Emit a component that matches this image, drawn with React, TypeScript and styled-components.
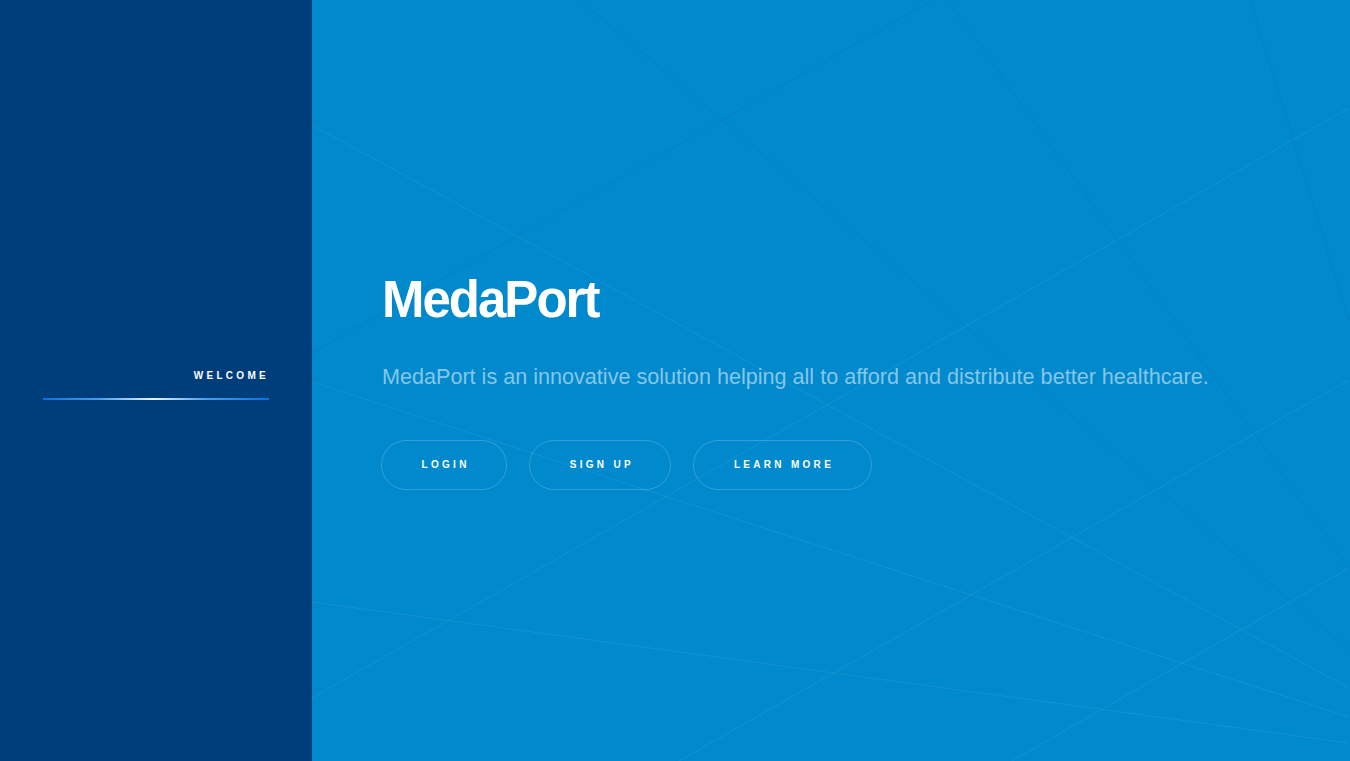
import React from "react";
import styled, { createGlobalStyle } from "styled-components";

const GlobalStyle = createGlobalStyle`
  html, body, #root { margin: 0; padding: 0; height: 100%; }
  body { font-family: "Liberation Sans", Arial, sans-serif; overflow: hidden; }
  * { box-sizing: border-box; }
`;

const Page = styled.div`
  display: grid;
  grid-template-columns: 312px 1fr;
  height: 100vh;
  width: 100vw;
`;

const Sidebar = styled.aside`
  background: #003d7b;
  display: flex;
  flex-direction: column;
  justify-content: center;
  padding: 9px 43px 0 43px;
`;

const NavItem = styled.div`
  display: flex;
  flex-direction: column;
  align-items: flex-end;
`;

const NavLabel = styled.span`
  color: #ffffff;
  font-size: 10px;
  line-height: 12px;
  font-weight: 700;
  letter-spacing: 3.3px;
  text-transform: uppercase;
`;

const NavUnderline = styled.div`
  align-self: stretch;
  height: 2px;
  margin-top: 16px;
  background: linear-gradient(90deg, #0d6fd8 0%, #4a9ee6 25%, #e6f4ff 49%, #4a9ee6 72%, #0a6fe0 100%);
`;

const Main = styled.main`
  position: relative;
  overflow: hidden;
  background: #0089cc;
  display: flex;
  flex-direction: column;
  justify-content: center;
  padding-left: 69px;
`;

const Lines = styled.svg`
  position: absolute;
  inset: 0;
  width: 100%;
  height: 100%;
  pointer-events: none;
`;

const Content = styled.div`
  position: relative;
  display: flex;
  flex-direction: column;
  align-items: flex-start;
`;

const Title = styled.h1`
  margin: 0 0 0 1px;
  color: #ffffff;
  font-size: 51px;
  line-height: 56px;
  font-weight: 700;
  letter-spacing: -2px;
`;

const Lead = styled.p`
  margin: 34px 0 0 1px;
  color: #86c6e8;
  font-size: 21.6px;
  line-height: 30px;
  font-weight: 400;
`;

const Actions = styled.div`
  display: flex;
  gap: 22px;
  margin-top: 48px;
`;

const PillButton = styled.button`
  height: 50px;
  padding: 0 36.5px 0 39.5px;
  border: 1px solid rgba(255, 255, 255, 0.2);
  border-radius: 25px;
  background: transparent;
  color: #ffffff;
  font-family: "Liberation Sans", Arial, sans-serif;
  font-size: 10px;
  font-weight: 700;
  letter-spacing: 3.3px;
  text-transform: uppercase;
  cursor: pointer;
`;

type Seg = { x1: number; y1: number; x2: number; y2: number; light?: boolean };

const segments: Seg[] = [
  { x1: 268, y1: 0, x2: 1037, y2: 650 },
  { x1: 621, y1: 0, x2: 0, y2: 353 },
  { x1: 0, y1: 125, x2: 1037, y2: 688, light: true },
  { x1: 636, y1: 0, x2: 1037, y2: 568 },
  { x1: 938, y1: 0, x2: 1037, y2: 320 },
  { x1: 1037, y1: 108, x2: 0, y2: 698, light: true },
  { x1: 0, y1: 382, x2: 1037, y2: 717, light: true },
  { x1: 0, y1: 602, x2: 1037, y2: 743, light: true },
  { x1: 367, y1: 761, x2: 1037, y2: 380, light: true },
  { x1: 700, y1: 761, x2: 1037, y2: 568, light: true },
];

export default function App() {
  return (
    <>
      <GlobalStyle />
      <Page>
        <Sidebar>
          <NavItem>
            <NavLabel>Welcome</NavLabel>
            <NavUnderline />
          </NavItem>
        </Sidebar>
        <Main>
          <Lines viewBox="0 0 1038 761" preserveAspectRatio="none">
            {segments.map((s, i) => (
              <line
                key={i}
                x1={s.x1}
                y1={s.y1}
                x2={s.x2}
                y2={s.y2}
                stroke={s.light ? "rgba(255,255,255,0.08)" : "rgba(30,100,170,0.25)"}
                strokeWidth={1}
              />
            ))}
          </Lines>
          <Content>
            <Title>MedaPort</Title>
            <Lead>
              MedaPort is an innovative solution helping all to afford and distribute better healthcare.
            </Lead>
            <Actions>
              <PillButton>Login</PillButton>
              <PillButton>Sign up</PillButton>
              <PillButton>Learn more</PillButton>
            </Actions>
          </Content>
        </Main>
      </Page>
    </>
  );
}
